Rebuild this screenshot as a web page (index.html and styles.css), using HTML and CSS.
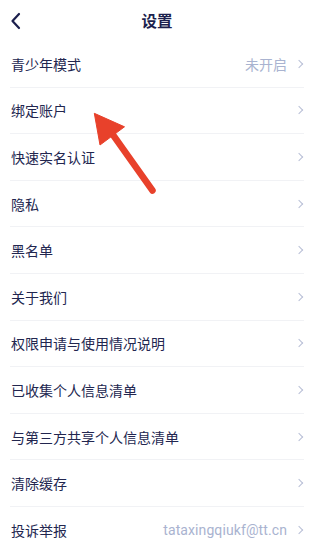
FILE: index.html
```html
<!DOCTYPE html>
<html lang="zh">
<head>
<meta charset="utf-8">
<link rel="stylesheet" href="styles.css">
</head>
<body>
<div class="page">
  <header class="topbar">
    <svg class="back" width="12" height="18" viewBox="0 0 12 18"><polyline points="9,2 2.5,9 9,16" fill="none" stroke="#1c1f4d" stroke-width="2.2" stroke-linecap="round" stroke-linejoin="round"/></svg>
    <h1 class="title">设置</h1>
  </header>
  <ul class="list">
    <li class="row"><span class="label">青少年模式</span><span class="value">未开启</span><span class="chev"></span></li>
    <li class="row"><span class="label">绑定账户</span><span class="chev"></span></li>
    <li class="row"><span class="label">快速实名认证</span><span class="chev"></span></li>
    <li class="row"><span class="label">隐私</span><span class="chev"></span></li>
    <li class="row"><span class="label">黑名单</span><span class="chev"></span></li>
    <li class="row"><span class="label">关于我们</span><span class="chev"></span></li>
    <li class="row"><span class="label">权限申请与使用情况说明</span><span class="chev"></span></li>
    <li class="row"><span class="label">已收集个人信息清单</span><span class="chev"></span></li>
    <li class="row"><span class="label">与第三方共享个人信息清单</span><span class="chev"></span></li>
    <li class="row"><span class="label">清除缓存</span><span class="chev"></span></li>
    <li class="row"><span class="label">投诉举报</span><span class="value email">tataxingqiukf@tt.cn</span><span class="chev"></span></li>
  </ul>
  <svg class="arrow" width="314" height="542" viewBox="0 0 314 542">
    <line x1="106" y1="125" x2="152.5" y2="190.5" stroke="#e8412b" stroke-width="6.5" stroke-linecap="round"/>
    <polygon points="94.3,113.3 124.5,126.8 100,145" fill="#e8412b" stroke="#e8412b" stroke-width="1" stroke-linejoin="round"/>
  </svg>
</div>
</body>
</html>
```
FILE: styles.css
```css
* { box-sizing: border-box; }
html, body { margin: 0; padding: 0; background: #fff; }
body {
  font-family: "Noto Sans CJK SC", "Noto Sans", sans-serif;
  color: #22264f;
  width: 314px;
  height: 542px;
  overflow: hidden;
}
.page { position: relative; }
.topbar {
  height: 41px;
  display: flex;
  align-items: center;
  justify-content: center;
  position: relative;
}
.back {
  position: absolute;
  left: 10px;
  top: 12px;
}
.title {
  margin: 0;
  font-size: 15.5px;
  font-weight: 700;
  color: #1c1f4d;
  line-height: 1;
}
.list {
  list-style: none;
  margin: 0;
  padding: 0 10px 0 10px;
}
.row {
  height: 46.6px;
  display: flex;
  align-items: center;
  border-bottom: 1px solid #f1f2f5;
  padding-left: 1px;
}
.label {
  font-size: 14px;
  flex: 1;
  color: #22264f;
}
.value {
  font-size: 14px;
  color: #a9b3d0;
  margin-right: 9px;
}
.email {
  font-family: Roboto, "Noto Sans", sans-serif;
  font-size: 14px;
  letter-spacing: 0.1px;
}
.chev {
  width: 6px;
  height: 6px;
  border-right: 1.3px solid #b8bfd6;
  border-top: 1.3px solid #b8bfd6;
  transform: rotate(45deg);
  margin-right: 2px;
}
.arrow {
  position: absolute;
  left: 0;
  top: 0;
  pointer-events: none;
}
```
